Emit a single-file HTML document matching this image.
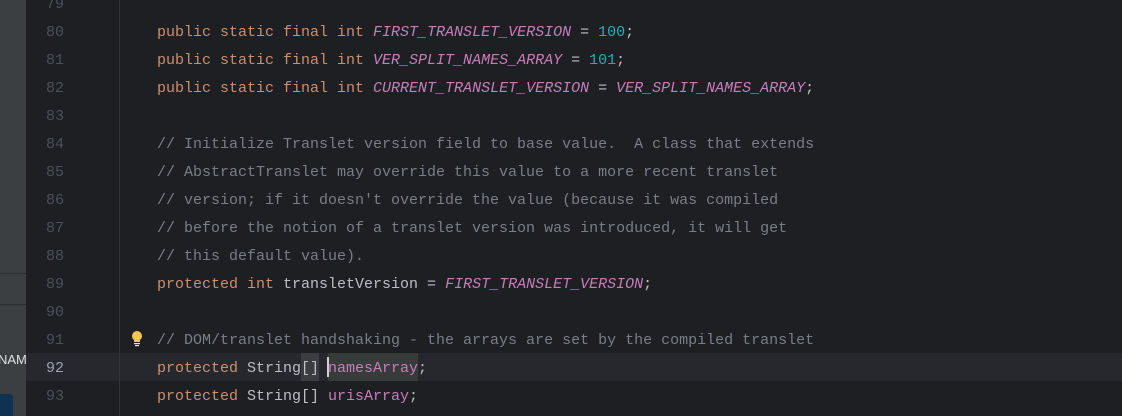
<!DOCTYPE html>
<html><head><style>
body{margin:0;width:1122px;height:416px;overflow:hidden;background:#1e1f22;position:relative;font-family:"Liberation Mono",monospace;font-size:15px}
.lp{position:absolute;left:0;top:0;width:26px;height:416px;background:#3c3f41;overflow:hidden}
.gut{position:absolute;left:119px;top:0;width:1px;height:416px;background:#313438}
.cur{position:absolute;left:26px;top:353px;width:1096px;height:28px;background:#26282e}
.ln{position:absolute;left:26px;width:38px;text-align:right;color:#4b5059;line-height:28px;height:28px;margin-top:2px}
.c{position:absolute;left:157px;line-height:28px;height:28px;white-space:pre;color:#bcbec4;margin-top:2px}
.k{color:#cf8e6d}.s{color:#c77dbb;font-style:italic}.n{color:#2aacb8}.m{color:#7a7e85}.f{color:#c77dbb}
</style></head><body>
<div class="cur"></div>
<div class="lp">
<div style="position:absolute;top:273px;left:0;width:26px;height:1px;background:#2b2d30"></div>
<div style="position:absolute;top:304px;left:0;width:26px;height:1px;background:#2b2d30"></div>
<div style="position:absolute;top:352px;left:-2px;font-family:'Liberation Sans',sans-serif;font-size:13px;color:#dfe1e5">NAM</div>
<div style="position:absolute;top:394px;left:-6px;width:19px;height:28px;border-radius:4px;background:#0e3250"></div>
</div>
<div class="gut"></div>
<div class="ln" style="top:-11px">79</div>
<div class="ln" style="top:17px">80</div>
<div class="ln" style="top:45px">81</div>
<div class="ln" style="top:73px">82</div>
<div class="ln" style="top:101px">83</div>
<div class="ln" style="top:129px">84</div>
<div class="ln" style="top:157px">85</div>
<div class="ln" style="top:185px">86</div>
<div class="ln" style="top:213px">87</div>
<div class="ln" style="top:241px">88</div>
<div class="ln" style="top:269px">89</div>
<div class="ln" style="top:297px">90</div>
<div class="ln" style="top:325px">91</div>
<div class="ln" style="top:353px;color:#a1a3ab">92</div>
<div class="ln" style="top:381px">93</div>
<svg style="position:absolute;left:130px;top:330px" width="14" height="18" viewBox="0 0 14 18"><circle cx="7" cy="6" r="5" fill="#f2c55c"/><rect x="4" y="10" width="6" height="2" fill="#f2c55c"/><rect x="4" y="13" width="6" height="1.2" fill="#dfe1e5"/><rect x="5" y="15" width="4" height="1.2" fill="#dfe1e5"/></svg>
<div class="c" style="top:17px"><span class="k">public static final int </span><span class="s">FIRST_TRANSLET_VERSION</span> = <span class="n">100</span>;</div>
<div class="c" style="top:45px"><span class="k">public static final int </span><span class="s">VER_SPLIT_NAMES_ARRAY</span> = <span class="n">101</span>;</div>
<div class="c" style="top:73px"><span class="k">public static final int </span><span class="s">CURRENT_TRANSLET_VERSION</span> = <span class="s">VER_SPLIT_NAMES_ARRAY</span>;</div>
<div class="c m" style="top:129px">// Initialize Translet version field to base value.  A class that extends</div>
<div class="c m" style="top:157px">// AbstractTranslet may override this value to a more recent translet</div>
<div class="c m" style="top:185px">// version; if it doesn't override the value (because it was compiled</div>
<div class="c m" style="top:213px">// before the notion of a translet version was introduced, it will get</div>
<div class="c m" style="top:241px">// this default value).</div>
<div class="c" style="top:269px"><span class="k">protected int </span>transletVersion = <span class="s">FIRST_TRANSLET_VERSION</span>;</div>
<div class="c m" style="top:325px">// DOM/translet handshaking - the arrays are set by the compiled translet</div>
<div style="position:absolute;left:301px;top:353px;width:18px;height:28px;background:#3b3d40"></div>
<div style="position:absolute;left:328px;top:353px;width:90px;height:28px;background:#373b39"></div>
<div style="position:absolute;left:327px;top:357px;width:2px;height:20px;background:#ced0d6"></div>
<div class="c" style="top:353px"><span class="k">protected </span>String[] <span class="f">namesArray</span>;</div>
<div class="c" style="top:381px"><span class="k">protected </span>String[] <span class="f">urisArray</span>;</div>
</body></html>
